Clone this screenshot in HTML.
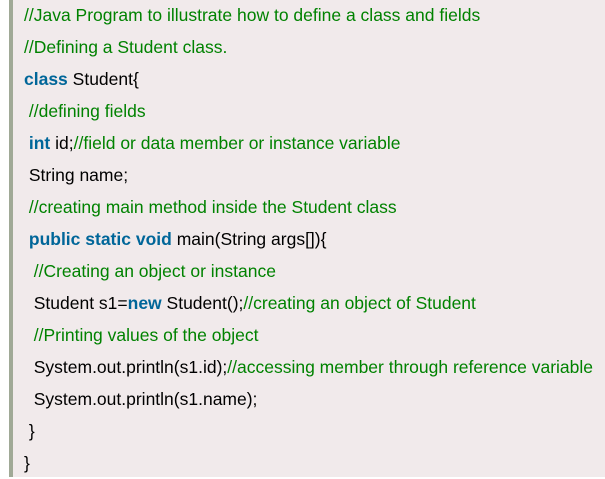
<!DOCTYPE html>
<html><head><style>
html,body{margin:0;padding:0;background:#fff;width:605px;height:477px;overflow:hidden}
.box{position:absolute;left:9px;top:0;width:596px;height:477px;background:#f1eaeb;border-left:4px solid #a0a996;box-sizing:border-box}
pre{margin:0;position:absolute;left:11px;top:-1px;font-family:"Liberation Sans",sans-serif;font-size:17.5px;line-height:32px;color:#000;white-space:pre}
.c{color:#008200}.k{color:#006699;font-weight:bold}
</style></head><body>
<div class="box"><pre><span class="c">//Java Program to illustrate how to define a class and fields</span>
<span class="c">//Defining a Student class.</span>
<span class="k">class</span> Student{
 <span class="c">//defining fields</span>
 <span class="k">int</span> id;<span class="c">//field or data member or instance variable</span>
 String name;
 <span class="c">//creating main method inside the Student class</span>
 <span class="k">public static void</span> main(String args[]){
  <span class="c">//Creating an object or instance</span>
  Student s1=<span class="k">new</span> Student();<span class="c">//creating an object of Student</span>
  <span class="c">//Printing values of the object</span>
  System.out.println(s1.id);<span class="c">//accessing member through reference variable</span>
  System.out.println(s1.name);
 }
}</pre></div>
</body></html>
